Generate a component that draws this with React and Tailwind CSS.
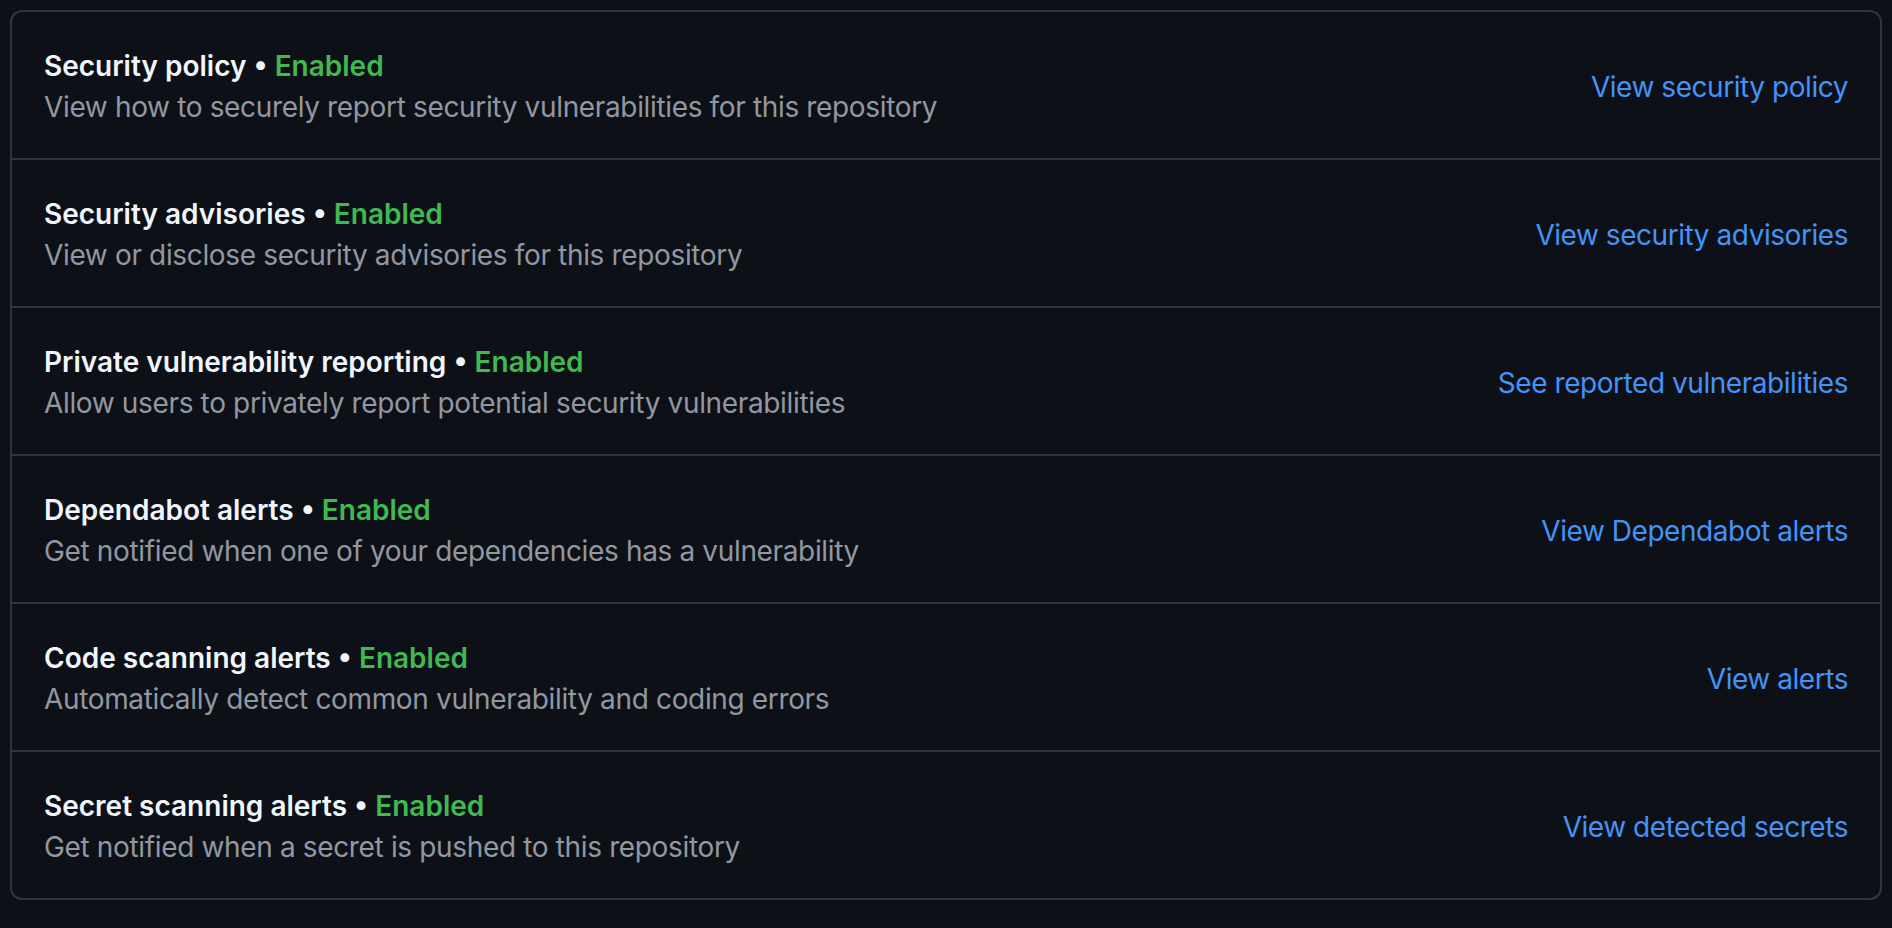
export default function App() {
  const rows = [
    ["Security policy", "View how to securely report security vulnerabilities for this repository", "View security policy"],
    ["Security advisories", "View or disclose security advisories for this repository", "View security advisories"],
    ["Private vulnerability reporting", "Allow users to privately report potential security vulnerabilities", "See reported vulnerabilities"],
    ["Dependabot alerts", "Get notified when one of your dependencies has a vulnerability", "View Dependabot alerts"],
    ["Code scanning alerts", "Automatically detect common vulnerability and coding errors", "View alerts"],
    ["Secret scanning alerts", "Get notified when a secret is pushed to this repository", "View detected secrets"],
  ];
  return (
    <div className="min-h-[928px] w-full bg-[#0d1117] px-[10px] pt-[10px] pb-[27px]" style={{ fontFamily: "Inter, 'Noto Sans', sans-serif" }}>
      <div className="rounded-[12px] border-2 border-[#30363d]">
        {rows.map(([title, desc, link], i) => (
          <div key={i} className={`flex items-center justify-between px-[32px] pt-[34px] pb-[30px] ${i > 0 ? "border-t-2 border-[#30363d]" : ""}`}>
            <div>
              <div className="text-[28px] leading-[41px] font-semibold text-[#f0f6fc]">
                {title} <span className="text-[#f0f6fc]">•</span> <span className="text-[#3fb950]">Enabled</span>
              </div>
              <div className="text-[28px] leading-[41px] tracking-[-0.35px] text-[#9198a1]">{desc}</div>
            </div>
            <a className="text-[28px] leading-[41px] tracking-[-0.45px] text-[#4493f8]">{link}</a>
          </div>
        ))}
      </div>
    </div>
  );
}
